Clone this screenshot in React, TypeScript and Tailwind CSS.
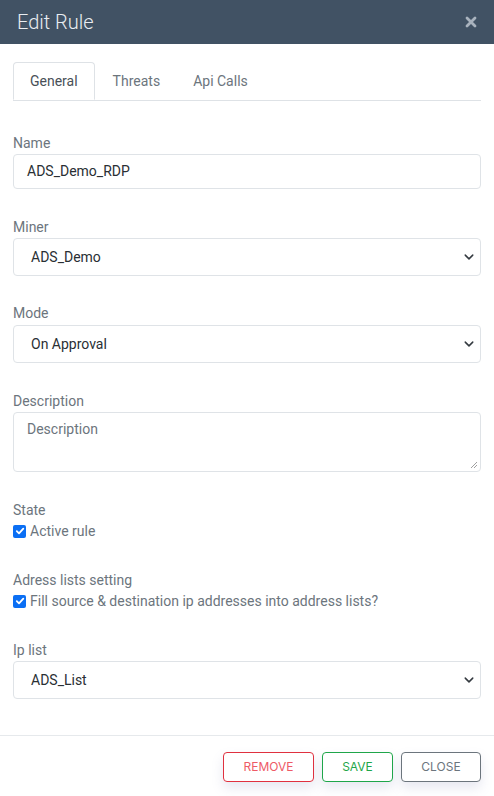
import React from "react";

const font = { fontFamily: "Roboto, 'Liberation Sans', sans-serif" };

function Chevron() {
  return (
    <svg width="10" height="10" viewBox="0 0 16 16" className="absolute right-[6px] top-1/2 -translate-y-1/2">
      <path d="M2 5l6 6 6-6" fill="none" stroke="#343a40" strokeWidth="2.4" strokeLinecap="round" strokeLinejoin="round" />
    </svg>
  );
}

function Select({ value }: { value: string }) {
  return (
    <div className="relative h-[38px] border border-[#dfe3e7] rounded-[4px] flex items-center pl-[17px] text-[14px] text-[#2a2f34] bg-white">
      {value}
      <Chevron />
    </div>
  );
}

function Check({ label }: { label: string }) {
  return (
    <div className="flex items-center gap-[4px] text-[14px] text-[#6c757d] leading-[20px]">
      <span className="w-[13px] h-[13px] rounded-[2px] bg-[#0b6ff4] flex items-center justify-center">
        <svg width="10" height="10" viewBox="0 0 10 10">
          <path d="M1.8 5.2l2.2 2.2L8.3 2.6" fill="none" stroke="white" strokeWidth="1.8" strokeLinecap="round" strokeLinejoin="round" />
        </svg>
      </span>
      {label}
    </div>
  );
}

export default function App() {
  return (
    <div className="w-[494px] h-[796px] bg-white flex flex-col" style={font}>
      <div className="h-[44px] bg-[#415264] flex items-center justify-between pl-[17px] pr-[17px]">
        <span className="text-[20px] text-[#e9edf1] font-light">Edit Rule</span>
        <svg width="12" height="12" viewBox="0 0 12 12">
          <path d="M2 2l8 8M10 2l-8 8" stroke="#a9b3be" strokeWidth="2.8" strokeLinecap="round" />
        </svg>
      </div>
      <div className="flex-1 px-[13px] pt-[18px] flex flex-col">
        <div className="flex border-b border-[#dee2e6] text-[14px]">
          <div className="h-[38px] px-[16px] mb-[-1px] flex items-center border border-[#dee2e6] border-b-white rounded-t-[4px] text-[#495057] bg-white">General</div>
          <div className="h-[38px] pl-[18px] pr-[17px] flex items-center text-[#6c757d]">Threats</div>
          <div className="h-[38px] px-[16px] flex items-center text-[#6c757d]">Api Calls</div>
        </div>

        <div className="mt-[32px] text-[14px] leading-[20px] text-[#6c757d]">Name</div>
        <div className="mt-[1px] h-[35px] border border-[#dfe3e7] rounded-[4px] flex items-center pl-[13px] text-[14px] text-[#2a2f34]">ADS_Demo_RDP</div>

        <div className="mt-[28px] text-[14px] leading-[20px] text-[#6c757d]">Miner</div>
        <div className="mt-[1px]"><Select value="ADS_Demo" /></div>

        <div className="mt-[27px] text-[14px] leading-[20px] text-[#6c757d]">Mode</div>
        <div className="mt-[2px]"><Select value="On Approval" /></div>

        <div className="mt-[28px] text-[14px] leading-[20px] text-[#6c757d]">Description</div>
        <div className="mt-[1px] relative h-[60px] border border-[#dfe3e7] rounded-[4px] pl-[13px] pt-[6px] text-[14px] text-[#6c757d]">
          Description
          <svg width="8" height="8" viewBox="0 0 8 8" className="absolute right-[2px] bottom-[2px]">
            <path d="M7 1L1 7M7 4L4 7" stroke="#888" strokeWidth="0.8" />
          </svg>
        </div>

        <div className="mt-[28px] text-[14px] leading-[20px] text-[#6c757d]">State</div>
        <div className="mt-[1px]"><Check label="Active rule" /></div>

        <div className="mt-[29px] text-[14px] leading-[20px] text-[#6c757d]">Adress lists setting</div>
        <div className="mt-[1px]"><Check label="Fill source & destination ip addresses into address lists?" /></div>

        <div className="mt-[29px] text-[14px] leading-[20px] text-[#6c757d]">Ip list</div>
        <div className="mt-[1px]"><Select value="ADS_List" /></div>
      </div>
      <div className="h-[61px] border-t border-[#e6e9ec] flex items-start justify-end gap-[8px] pr-[13px] pt-[16px] text-[12px]" style={{ fontFamily: "Inter, 'Open Sans', sans-serif" }}>
        <div className="w-[91px] h-[30px] border border-[#e0313f] rounded-[4px] flex items-center justify-center text-[#ee5a66] shadow-[0_6px_12px_rgba(120,130,180,0.18)]">REMOVE</div>
        <div className="w-[71px] h-[30px] border border-[#1fa64a] rounded-[4px] flex items-center justify-center text-[#1fa64a] shadow-[0_6px_12px_rgba(120,130,180,0.18)]">SAVE</div>
        <div className="w-[80px] h-[30px] border border-[#6c757d] rounded-[4px] flex items-center justify-center text-[#6c757d] shadow-[0_6px_12px_rgba(120,130,180,0.18)]">CLOSE</div>
      </div>
    </div>
  );
}
